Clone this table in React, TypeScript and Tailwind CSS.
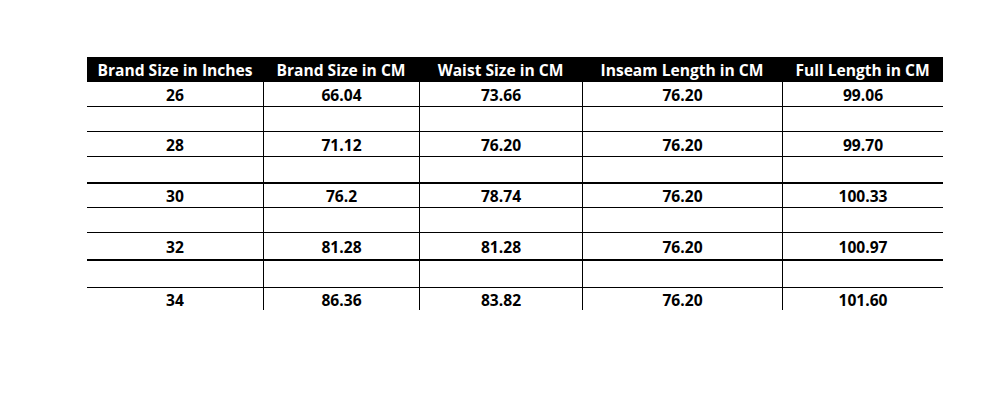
const COLS = "grid grid-cols-[176px_156px_163px_200px_161px]"

const HEADERS = [
  "Brand Size in Inches",
  "Brand Size in CM",
  "Waist Size in CM",
  "Inseam Length in CM",
  "Full Length in CM",
]

type Row = { cells: string[]; h: string; border: string }

// Blank spacer rows sit between the size rows, as in the source sheet.
const ROWS: Row[] = [
  { cells: ["26", "66.04", "73.66", "76.20", "99.06"], h: "h-[25px]", border: "border-b border-black" },
  { cells: ["", "", "", "", ""], h: "h-[25px]", border: "border-b border-black" },
  { cells: ["28", "71.12", "76.20", "76.20", "99.70"], h: "h-[25px]", border: "border-b border-black" },
  { cells: ["", "", "", "", ""], h: "h-[27px]", border: "border-b-2 border-black" },
  { cells: ["30", "76.2", "78.74", "76.20", "100.33"], h: "h-[24px]", border: "border-b border-black" },
  { cells: ["", "", "", "", ""], h: "h-[25px]", border: "border-b border-black" },
  { cells: ["32", "81.28", "81.28", "76.20", "100.97"], h: "h-[28px]", border: "border-b-2 border-black" },
  { cells: ["", "", "", "", ""], h: "h-[27px]", border: "border-b border-black" },
  { cells: ["34", "86.36", "83.82", "76.20", "101.60"], h: "h-[22px]", border: "" },
]

export default function App() {
  return (
    <div className="h-[400px] w-[1000px] bg-white pl-[87px] pt-[57px] font-['Open_Sans','Liberation_Sans',sans-serif] font-bold text-[15.6px] text-black">
      <div className="w-[856px]">
        <div className={COLS + " h-[25px] bg-black text-white"}>
          {HEADERS.map((h) => (
            <div key={h} className="flex items-center justify-center whitespace-nowrap pt-[2px] leading-none">
              {h}
            </div>
          ))}
        </div>
        {ROWS.map((r, i) => (
          <div key={i} className={COLS + " " + r.h + " " + r.border}>
            {r.cells.map((c, j) => (
              <div
                key={j}
                className={
                  "flex items-center justify-center pt-[3px] leading-none " +
                  (j > 0 ? "border-l border-black" : "")
                }
              >
                {c}
              </div>
            ))}
          </div>
        ))}
      </div>
    </div>
  )
}
